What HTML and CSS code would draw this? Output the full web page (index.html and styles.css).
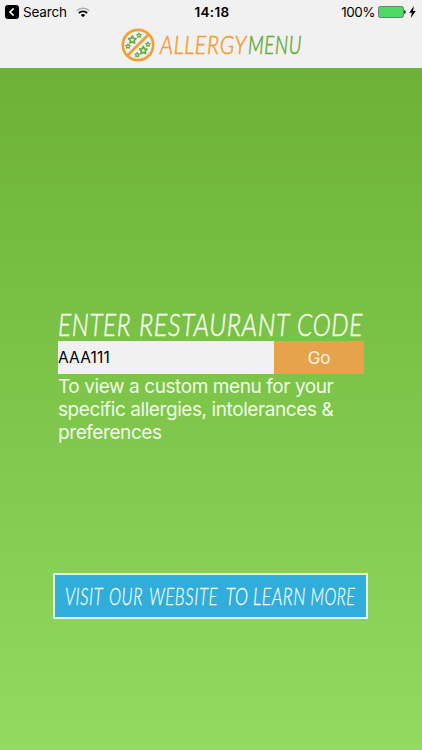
FILE: index.html
```html
<!DOCTYPE html>
<html lang="en">
<head>
  <meta charset="UTF-8" />
  <meta name="viewport" content="width=device-width, initial-scale=1.0"/>
  <title>Allergy Menu</title>
  <link rel="stylesheet" href="styles.css">
</head>
<body>

  <header class="header">
    <div class="status">
      <div class="status-left">
        <svg width="14" height="14" viewBox="0 0 14 14">
          <rect width="14" height="14" rx="3" fill="#000"/>
          <path d="M8.6 3.5 5 7l3.6 3.5" fill="none" stroke="#fff" stroke-width="1.7"/>
        </svg>
        <span class="back">Search</span>
        <svg class="wifi" width="14" height="11" viewBox="0 0 14 11">
          <path d="M.8 3.7a9 9 0 0 1 12.4 0" fill="none" stroke="#aaa" stroke-width="1.5"/>
          <path d="M2.9 6a6 6 0 0 1 8.2 0" fill="none" stroke="#000" stroke-width="1.9"/>
          <path d="M4.8 8a3.2 3.2 0 0 1 4.4 0L7 10.3z" fill="#000"/>
        </svg>
      </div>
      <div class="time">14:18</div>
      <div class="status-right">
        <span class="percent">100%</span>
        <svg width="28" height="12" viewBox="0 0 28 12">
          <rect x=".5" y=".5" width="25" height="11" rx="2" fill="#4cd964" stroke="#777"/>
          <path d="M26.3 4c1.8.5 1.8 3.5 0 4z" fill="#000"/>
        </svg>
        <svg class="bolt" width="7" height="12" viewBox="0 0 7 12">
          <path d="M4.8 0 .2 6.7h2.6L1.8 12 6.8 5H4z" fill="#000"/>
        </svg>
      </div>
    </div>

    <div class="logo">
      <svg width="34" height="34" viewBox="0 0 34 34">
        <defs>
          <path id="star" d="M0-3.8 1.2-1.5 3.7-1.1 1.9.7 2.3 3.3 0 2.1-2.3 3.3-1.9.7-3.7-1.1-1.2-1.5z" fill="none" stroke="#67ad37" stroke-linejoin="round"/>
        </defs>
        <circle cx="17" cy="17" r="15.2" fill="none" stroke="#f0a039" stroke-width="2.7"/>
        <path d="M6.2 27.8 27.8 6.2" stroke="#f0a039" stroke-width="2.7"/>
        <use href="#star" stroke-width="1.7" transform="translate(11.3 11.8)"/>
        <use href="#star" stroke-width="2" transform="translate(18 7.3) scale(.6)"/>
        <use href="#star" stroke-width="2" transform="translate(7 18.2) scale(.6)"/>
        <use href="#star" stroke-width="1.7" transform="translate(22.3 22.3)"/>
        <use href="#star" stroke-width="2" transform="translate(27 16.2) scale(.6)"/>
        <use href="#star" stroke-width="2" transform="translate(16.2 26.8) scale(.6)"/>
      </svg>
      <svg class="script brand" width="150" height="34" viewBox="0 0 150 34">
        <text class="orange" x="3" y="26" textLength="87" lengthAdjust="spacingAndGlyphs">ALLERGY</text>
        <text class="green" x="91" y="26" textLength="54" lengthAdjust="spacingAndGlyphs">MENU</text>
      </svg>
    </div>
  </header>

  <main class="main">
    <form class="code-form">
      <svg class="script title" width="312" height="40" viewBox="0 0 312 40">
        <text x="0" y="30.5" textLength="73" lengthAdjust="spacingAndGlyphs">ENTER</text>
        <text x="81" y="30.5" textLength="151" lengthAdjust="spacingAndGlyphs">RESTAURANT</text>
        <text x="239" y="30.5" textLength="66" lengthAdjust="spacingAndGlyphs">CODE</text>
      </svg>
      <div class="code-row">
        <input class="code" type="text" value="AAA111">
        <button class="go" type="button">Go</button>
      </div>
      <p class="hint">To view a custom menu for your<br>specific allergies, intolerances &amp;<br>preferences</p>
    </form>

    <a class="visit">
      <svg class="script" width="310" height="42" viewBox="0 0 310 42">
        <text x="10" y="29.5" textLength="38" lengthAdjust="spacingAndGlyphs">VISIT</text>
        <text x="54" y="29.5" textLength="34" lengthAdjust="spacingAndGlyphs">OUR</text>
        <text x="94" y="29.5" textLength="69" lengthAdjust="spacingAndGlyphs">WEBSITE</text>
        <text x="170.5" y="29.5" textLength="23" lengthAdjust="spacingAndGlyphs">TO</text>
        <text x="198" y="29.5" textLength="53" lengthAdjust="spacingAndGlyphs">LEARN</text>
        <text x="255.5" y="29.5" textLength="45" lengthAdjust="spacingAndGlyphs">MORE</text>
      </svg>
    </a>
  </main>

</body>
</html>
```

FILE: styles.css
```css
:root {
  --light: #f1f1f1;
  --orange: #e5a44b;
  --blue: #30addb;
}

* {
  box-sizing: border-box;
}

body {
  margin: 0;
  height: 100vh;
  display: flex;
  flex-direction: column;
  font-family: Inter, "Liberation Sans", sans-serif;
}

svg {
  display: block;
}

.header {
  height: 68px;
  background: var(--light);
}

.status {
  display: grid;
  grid-template-columns: 1fr auto 1fr;
  align-items: center;
  height: 24px;
  padding: 0 6px 0 5px;
  font-size: 13.5px;
  color: #000;
}

.status-left,
.status-right {
  display: flex;
  align-items: center;
}

.status-right {
  justify-content: flex-end;
}

.back {
  margin-left: 4px;
  letter-spacing: -0.15px;
}

.wifi {
  margin-left: 9px;
}

.time {
  padding-left: 3px;
  font-weight: 600;
  letter-spacing: 0.3px;
}

.percent {
  margin-right: 3px;
  letter-spacing: -0.5px;
}

.bolt {
  margin-left: 3px;
}

.logo {
  display: flex;
  margin: 4px 0 0 121px;
}

.script {
  font-family: Lato, sans-serif;
  font-style: italic;
  font-weight: 300;
  font-size: 23px;
  letter-spacing: 0.8px;
  fill: #f4fbf0;
  stroke: #f4fbf0;
  stroke-width: 0.3px;
  overflow: visible;
}

.brand {
  margin-left: 2px;
  font-size: 25px;
  stroke-width: 0.6px;
}

.orange {
  fill: #f0a039;
  stroke: #f0a039;
}

.green {
  fill: #67ad37;
  stroke: #67ad37;
}

.main {
  flex: 1;
  display: flex;
  flex-direction: column;
  background: linear-gradient(#6bb236, #92da60);
}

.code-form {
  width: 306px;
  margin: 237px 0 0 58px;
}

.title {
  margin-bottom: -4px;
  font-size: 30.5px;
  stroke-width: 0.5px;
}

.code-row {
  display: flex;
  height: 33px;
}

.code {
  width: 216px;
  padding: 0;
  border: none;
  border-radius: 0;
  background: var(--light);
  font-family: inherit;
  font-size: 15.5px;
  letter-spacing: 0.2px;
  color: #000;
}

.go {
  flex: 1;
  padding: 0;
  border: none;
  background: var(--orange);
  font-family: inherit;
  font-size: 17px;
  letter-spacing: -0.3px;
  color: #fbf3e6;
}

.hint {
  margin: 1px 0 0;
  font-size: 19px;
  line-height: 23px;
  letter-spacing: -0.42px;
  white-space: nowrap;
  color: #f0fae8;
}

.visit {
  width: 315px;
  height: 46px;
  margin: 129px 0 0 53px;
  border: 2px solid #e2f4ee;
  background: var(--blue);
}
```
